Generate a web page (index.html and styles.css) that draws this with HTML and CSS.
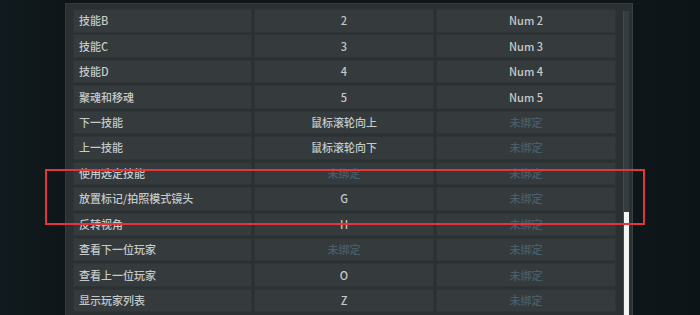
FILE: index.html
```html
<!DOCTYPE html>
<html lang="zh">
<head>
<meta charset="utf-8">
<link rel="stylesheet" href="styles.css">
</head>
<body>
<div class="page">
  <div class="panel">
    <div class="table">
      <div class="cell name">技能B</div><div class="cell key">2</div><div class="cell key">Num 2</div>
      <div class="cell name">技能C</div><div class="cell key">3</div><div class="cell key">Num 3</div>
      <div class="cell name">技能D</div><div class="cell key">4</div><div class="cell key">Num 4</div>
      <div class="cell name">聚魂和移魂</div><div class="cell key">5</div><div class="cell key">Num 5</div>
      <div class="cell name">下一技能</div><div class="cell key">鼠标滚轮向上</div><div class="cell key unbound">未绑定</div>
      <div class="cell name">上一技能</div><div class="cell key">鼠标滚轮向下</div><div class="cell key unbound">未绑定</div>
      <div class="cell name">使用选定技能</div><div class="cell key unbound">未绑定</div><div class="cell key unbound">未绑定</div>
      <div class="cell name">放置标记/拍照模式镜头</div><div class="cell key">G</div><div class="cell key unbound">未绑定</div>
      <div class="cell name">反转视角</div><div class="cell key">H</div><div class="cell key unbound">未绑定</div>
      <div class="cell name">查看下一位玩家</div><div class="cell key unbound">未绑定</div><div class="cell key unbound">未绑定</div>
      <div class="cell name">查看上一位玩家</div><div class="cell key">O</div><div class="cell key unbound">未绑定</div>
      <div class="cell name">显示玩家列表</div><div class="cell key">Z</div><div class="cell key unbound">未绑定</div>
    </div>
    <div class="scroll-track">
      <div class="scroll-thumb"></div>
    </div>
  </div>
  <div class="highlight"></div>
</div>
</body>
</html>
```

FILE: styles.css
```css
html, body {
  margin: 0;
  padding: 0;
  width: 700px;
  height: 315px;
  overflow: hidden;
  background: #0e1619;
}

.page {
  position: relative;
  width: 700px;
  height: 315px;
  overflow: hidden;
  background: linear-gradient(90deg, #111a1e 0px, #0e1619 65px, #0e1619 640px, #0c1417 700px);
  font-family: "Noto Sans CJK SC", "Noto Sans", sans-serif;
}

.panel {
  margin-left: 65px;
  margin-top: 3px;
  width: 568px;
  height: 340px;
  box-sizing: border-box;
  background: #2b3133;
  border-left: 1px solid #353b3e;
  border-top: 1px solid #33393c;
  border-right: 1px solid #3a4144;
  display: flex;
  padding: 6px 0 0 8px;
}

.table {
  display: grid;
  grid-template-columns: 177px 178px 178px;
  grid-auto-rows: 21.5px;
  column-gap: 4px;
  row-gap: 3.95px;
  align-content: start;
}

.cell {
  background: #353b3d;
  box-shadow: 0 0 0 1px #2f3537;
  display: flex;
  align-items: center;
  font-size: 11px;
  color: #c4c9c9;
  font-weight: 500;
  white-space: nowrap;
  line-height: 1;
}

.name {
  padding-left: 5px;
}

.key {
  justify-content: center;
}

.unbound {
  color: #4a5e69;
}

.scroll-track {
  margin-left: 8px;
  width: 6px;
  margin-top: 1px;
  background: #363d40;
  border-left: 1px solid #434a4d;
  box-sizing: border-box;
  display: flex;
  flex-direction: column;
}

.scroll-thumb {
  margin-top: 201px;
  height: 140px;
  background: #f2f4f4;
}

.highlight {
  position: absolute;
  left: 45px;
  top: 169px;
  width: 600px;
  height: 56px;
  box-sizing: border-box;
  border: 2px solid #e4353c;
}
```
